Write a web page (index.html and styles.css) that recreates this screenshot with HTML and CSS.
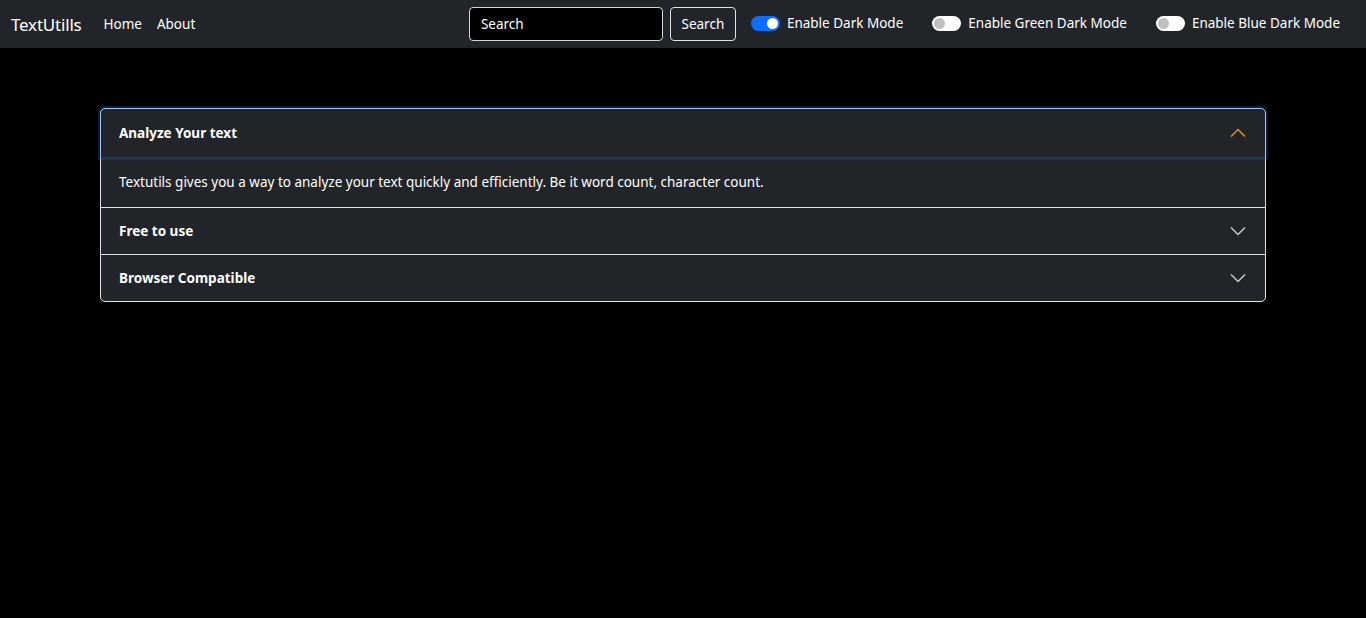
FILE: index.html
```html
<!DOCTYPE html>
<html lang="en">
<head>
<meta charset="utf-8">
<title>TextUtills</title>
<link rel="stylesheet" href="styles.css">
</head>
<body>
<nav class="navbar">
  <a class="brand" href="#">TextUtills</a>
  <ul class="nav-links">
    <li><a href="#">Home</a></li>
    <li><a href="#">About</a></li>
  </ul>
  <form class="search">
    <input class="search-input" type="search" placeholder="Search">
    <button class="search-btn" type="button">Search</button>
  </form>
  <div class="switches">
    <label class="switch"><span class="track on"><span class="knob"></span></span><span class="switch-label">Enable Dark Mode</span></label>
    <label class="switch"><span class="track"><span class="knob"></span></span><span class="switch-label">Enable Green Dark Mode</span></label>
    <label class="switch"><span class="track"><span class="knob"></span></span><span class="switch-label">Enable Blue Dark Mode</span></label>
  </div>
</nav>

<main class="content">
  <div class="accordion">
    <div class="acc-item">
      <div class="acc-header active">
        <span class="acc-title">Analyze Your text</span>
        <svg class="chev up" width="16" height="16" viewBox="0 0 16 16"><path d="M1 11.5 L8 4.5 L15 11.5" fill="none" stroke="currentColor" stroke-width="1.5"/></svg>
      </div>
      <div class="acc-body">Textutils gives you a way to analyze your text quickly and efficiently. Be it word count, character count.</div>
    </div>
    <div class="acc-item">
      <div class="acc-header">
        <span class="acc-title">Free to use</span>
        <svg class="chev" width="16" height="16" viewBox="0 0 16 16"><path d="M1 4.5 L8 11.5 L15 4.5" fill="none" stroke="currentColor" stroke-width="1.5"/></svg>
      </div>
    </div>
    <div class="acc-item">
      <div class="acc-header">
        <span class="acc-title">Browser Compatible</span>
        <svg class="chev" width="16" height="16" viewBox="0 0 16 16"><path d="M1 4.5 L8 11.5 L15 4.5" fill="none" stroke="currentColor" stroke-width="1.5"/></svg>
      </div>
    </div>
  </div>
</main>
</body>
</html>
```

FILE: styles.css
```css
* { box-sizing: border-box; }
html, body { margin: 0; padding: 0; }
body {
  background: #000;
  color: #fff;
  font-family: "Noto Sans", "Open Sans", sans-serif;
  font-size: 13.5px;
  height: 618px;
}
a { color: inherit; text-decoration: none; }

.navbar {
  height: 48px;
  background: #212529;
  display: flex;
  align-items: center;
  padding: 0 25px 0 11px;
}
.brand {
  font-size: 17px;
  color: #fff;
  margin-right: 22px;
  letter-spacing: -0.2px;
}
.nav-links {
  list-style: none;
  margin: 0;
  padding: 0;
  display: flex;
  gap: 15px;
  font-size: 13.5px;
}
.search {
  margin-left: auto;
  display: flex;
  gap: 7px;
  margin-right: 15px;
}
.search-input {
  width: 194px;
  height: 34px;
  background: #000;
  border: 1px solid #ced4da;
  border-radius: 4px;
  color: #fff;
  padding: 0 11px;
  font: inherit;
  font-size: 13.5px;
  outline: none;
}
.search-input::placeholder { color: #fff; opacity: 1; }
.search-btn {
  height: 34px;
  width: 66px;
  background: transparent;
  border: 1px solid #dee2e6;
  border-radius: 4px;
  color: #fff;
  font: inherit;
  font-size: 13.5px;
  padding: 0;
}
.switches {
  display: flex;
  gap: 29px;
  align-items: center;
  margin-top: -2px;
  margin-right: 1px;
}
.switch {
  display: flex;
  align-items: center;
  gap: 7px;
  font-size: 13.5px;
}
.track {
  width: 29px;
  height: 15px;
  border-radius: 8px;
  background: #fff;
  display: flex;
  align-items: center;
  padding: 0 2px;
}
.knob {
  width: 11px;
  height: 11px;
  border-radius: 50%;
  background: #c0c0c0;
}
.track.on { background: #0d6efd; justify-content: flex-end; }
.track.on .knob { background: #fff; }

.content {
  padding: 60px 100px 0;
}
.accordion {
  border: 1px solid #dee2e6;
  border-radius: 5px;
  background: #212529;
}
.acc-item + .acc-item { border-top: 1px solid #dee2e6; }
.acc-header {
  display: flex;
  align-items: center;
  justify-content: space-between;
  height: 46px;
  padding: 0 19px 0 18px;
  font-weight: 700;
  color: #fff;
}
.acc-header.active {
  position: relative;
  z-index: 1;
  border-radius: 4px 4px 0 0;
  box-shadow: 0 0 0 3px rgba(13, 110, 253, 0.25);
  height: 48px;
}
.chev { color: #c9c9c9; }
.chev.up { color: #e0921c; }
.acc-body {
  padding: 0 18px;
  height: 50px;
  display: flex;
  align-items: center;
}
```
